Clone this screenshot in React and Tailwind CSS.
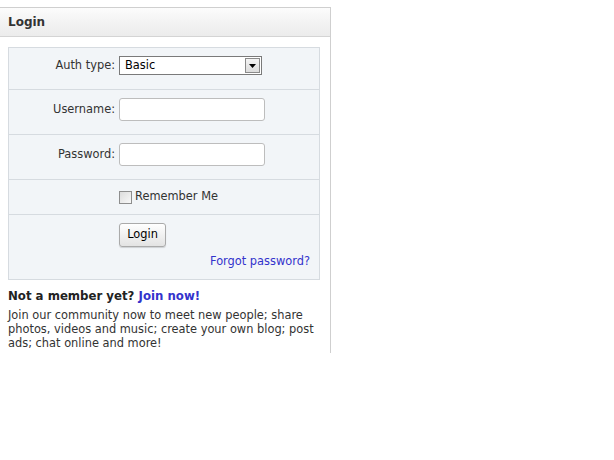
import React from "react";

export default function App() {
  const font = { fontFamily: '"DejaVu Sans", Verdana, sans-serif' };
  return (
    <div className="w-[614px] h-[460px] bg-white text-[11.4px] text-[#333]" style={font}>
      <div className="pt-[7px]">
        <div className="w-[331px] border-t border-r border-[#cfcfcf] h-[346px]">
          <div className="h-[29px] border-b border-[#d4d4d4] bg-gradient-to-b from-[#fcfcfc] via-[#f3f3f3] to-[#ececec] flex items-center pl-[8px]">
            <span className="font-bold text-[12px] text-[#333]">Login</span>
          </div>
          <div className="pl-[8px] pr-[10px] pt-[10px]">
            <div className="border border-[#d6dbe0] bg-[#f2f5f8]">
              <div className="h-[42px] pt-[8px] flex items-start border-b border-[#d6dbe0]">
                <div className="w-[110px] h-[19px] flex items-center justify-end pr-[4px]">Auth type:</div>
                <div className="w-[143px] h-[19px] border border-[#7a7a7a] bg-white flex items-center justify-between pl-[5px] pr-[1px] text-[#000]">
                  <span>Basic</span>
                  <div className="w-[15px] h-[15px] border border-[#8a8a8a] bg-gradient-to-b from-[#f4f4f4] to-[#dcdcdc] flex items-center justify-center">
                    <svg width="7" height="4" viewBox="0 0 7 4"><path d="M0 0h7L3.5 4z" fill="#000" /></svg>
                  </div>
                </div>
              </div>
              <div className="h-[45px] pt-[8px] flex items-start border-b border-[#d6dbe0]">
                <div className="w-[110px] h-[23px] flex items-center justify-end pr-[4px]">Username:</div>
                <div className="w-[146px] h-[23px] border border-[#bdbdbd] rounded-[3px] bg-white" />
              </div>
              <div className="h-[45px] pt-[8px] flex items-start border-b border-[#d6dbe0]">
                <div className="w-[110px] h-[23px] flex items-center justify-end pr-[4px]">Password:</div>
                <div className="w-[146px] h-[23px] border border-[#bdbdbd] rounded-[3px] bg-white" />
              </div>
              <div className="h-[35px] flex items-center border-b border-[#d6dbe0]">
                <div className="w-[110px]" />
                <div className="w-[13px] h-[13px] border border-[#8e8e8e] bg-gradient-to-br from-[#dcdcdc] to-[#f8f8f8] mr-[3px]" />
                <span>Remember Me</span>
              </div>
              <div className="h-[64px] pt-[8px] pr-[9px]">
                <div className="flex">
                  <div className="w-[110px]" />
                  <div className="w-[47px] h-[24px] border border-[#aaa] rounded-[3px] bg-gradient-to-b from-[#ffffff] to-[#e3e3e3] flex items-center justify-center text-[#000] shadow-[0_1px_1px_rgba(0,0,0,0.15)]">Login</div>
                </div>
                <div className="text-right mt-[6px] text-[#3333cc]">Forgot password?</div>
              </div>
            </div>
          </div>
          <div className="pl-[8px] pt-[8px] pr-[10px]">
            <div className="text-[11.75px] font-bold text-[#222]">Not a member yet? <span className="text-[#3333cc]">Join now!</span></div>
            <div className="leading-[14px] mt-[2px] text-[#333]">Join our community now to meet new people; share photos, videos and music; create your own blog; post ads; chat online and more!</div>
          </div>
        </div>
      </div>
    </div>
  );
}
